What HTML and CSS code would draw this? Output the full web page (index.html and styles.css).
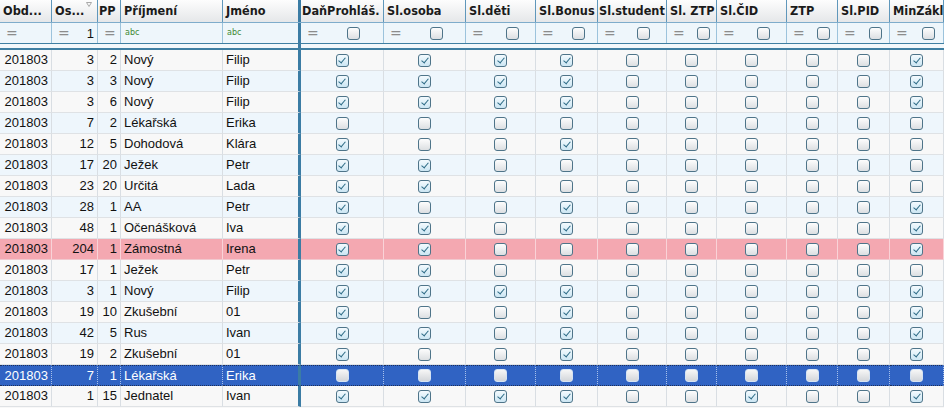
FILE: index.html
```html
<!DOCTYPE html>
<html>
<head>
<meta charset="utf-8">
<link rel="stylesheet" href="styles.css">
</head>
<body>
<div class="grid hdr">
  <div class="c">Obd...</div>
  <div class="c sort"><span>Os...</span><svg class="tri" width="6" height="5" viewBox="0 0 6 5"><path d="M0.5 0.5 H5.5 L3 4.5 Z" fill="none" stroke="#a9a9a9" stroke-width="1"/></svg></div>
  <div class="c tight">PP</div>
  <div class="c">Příjmení</div>
  <div class="c sep">Jméno</div>
  <div class="c tight">DaňProhláš.</div>
  <div class="c">Sl.osoba</div>
  <div class="c">Sl.děti</div>
  <div class="c">Sl.Bonus</div>
  <div class="c tight">Sl.student</div>
  <div class="c">Sl. ZTP</div>
  <div class="c">Sl.ČID</div>
  <div class="c">ZTP</div>
  <div class="c">Sl.PID</div>
  <div class="c">MinZákl</div>
</div>
<div class="grid flt">
  <div class="c"><span class="eq">=</span></div>
  <div class="c"><span class="eq">=</span><span class="fv">1</span></div>
  <div class="c"><span class="eq">=</span></div>
  <div class="c"><span class="abc">abc</span></div>
  <div class="c sep"><span class="abc">abc</span></div>
  <div class="c"><span class="eq">=</span><span class="fk"><i class="cb"></i></span></div>
  <div class="c"><span class="eq">=</span><span class="fk"><i class="cb"></i></span></div>
  <div class="c"><span class="eq">=</span><span class="fk"><i class="cb"></i></span></div>
  <div class="c"><span class="eq">=</span><span class="fk"><i class="cb"></i></span></div>
  <div class="c"><span class="eq">=</span><span class="fk"><i class="cb"></i></span></div>
  <div class="c"><span class="eq">=</span><span class="fk"><i class="cb"></i></span></div>
  <div class="c"><span class="eq">=</span><span class="fk"><i class="cb"></i></span></div>
  <div class="c"><span class="eq">=</span><span class="fk"><i class="cb"></i></span></div>
  <div class="c"><span class="eq">=</span><span class="fk"><i class="cb"></i></span></div>
  <div class="c"><span class="eq">=</span><span class="fk"><i class="cb"></i></span></div>
</div>
<div class="split"><div class="split-l"></div><div class="split-r"></div></div>

<div class="grid row odd">
  <div class="c n">201803</div><div class="c n">3</div><div class="c n">2</div><div class="c t">Nový</div><div class="c t sep">Filip</div>
  <div class="c k"><i class="cb on"></i></div><div class="c k"><i class="cb on"></i></div><div class="c k"><i class="cb on"></i></div><div class="c k"><i class="cb on"></i></div>
  <div class="c k"><i class="cb"></i></div><div class="c k"><i class="cb"></i></div><div class="c k"><i class="cb"></i></div><div class="c k"><i class="cb"></i></div><div class="c k"><i class="cb"></i></div><div class="c k"><i class="cb on"></i></div>
</div>
<div class="grid row even">
  <div class="c n">201803</div><div class="c n">3</div><div class="c n">3</div><div class="c t">Nový</div><div class="c t sep">Filip</div>
  <div class="c k"><i class="cb on"></i></div><div class="c k"><i class="cb on"></i></div><div class="c k"><i class="cb on"></i></div><div class="c k"><i class="cb on"></i></div>
  <div class="c k"><i class="cb"></i></div><div class="c k"><i class="cb"></i></div><div class="c k"><i class="cb"></i></div><div class="c k"><i class="cb"></i></div><div class="c k"><i class="cb"></i></div><div class="c k"><i class="cb on"></i></div>
</div>
<div class="grid row odd">
  <div class="c n">201803</div><div class="c n">3</div><div class="c n">6</div><div class="c t">Nový</div><div class="c t sep">Filip</div>
  <div class="c k"><i class="cb on"></i></div><div class="c k"><i class="cb on"></i></div><div class="c k"><i class="cb on"></i></div><div class="c k"><i class="cb on"></i></div>
  <div class="c k"><i class="cb"></i></div><div class="c k"><i class="cb"></i></div><div class="c k"><i class="cb"></i></div><div class="c k"><i class="cb"></i></div><div class="c k"><i class="cb"></i></div><div class="c k"><i class="cb on"></i></div>
</div>
<div class="grid row even">
  <div class="c n">201803</div><div class="c n">7</div><div class="c n">2</div><div class="c t">Lékařská</div><div class="c t sep">Erika</div>
  <div class="c k"><i class="cb"></i></div><div class="c k"><i class="cb"></i></div><div class="c k"><i class="cb"></i></div><div class="c k"><i class="cb"></i></div>
  <div class="c k"><i class="cb"></i></div><div class="c k"><i class="cb"></i></div><div class="c k"><i class="cb"></i></div><div class="c k"><i class="cb"></i></div><div class="c k"><i class="cb"></i></div><div class="c k"><i class="cb"></i></div>
</div>
<div class="grid row odd">
  <div class="c n">201803</div><div class="c n">12</div><div class="c n">5</div><div class="c t">Dohodová</div><div class="c t sep">Klára</div>
  <div class="c k"><i class="cb on"></i></div><div class="c k"><i class="cb"></i></div><div class="c k"><i class="cb"></i></div><div class="c k"><i class="cb on"></i></div>
  <div class="c k"><i class="cb"></i></div><div class="c k"><i class="cb"></i></div><div class="c k"><i class="cb"></i></div><div class="c k"><i class="cb"></i></div><div class="c k"><i class="cb"></i></div><div class="c k"><i class="cb"></i></div>
</div>
<div class="grid row even">
  <div class="c n">201803</div><div class="c n">17</div><div class="c n">20</div><div class="c t">Ježek</div><div class="c t sep">Petr</div>
  <div class="c k"><i class="cb on"></i></div><div class="c k"><i class="cb on"></i></div><div class="c k"><i class="cb"></i></div><div class="c k"><i class="cb"></i></div>
  <div class="c k"><i class="cb"></i></div><div class="c k"><i class="cb"></i></div><div class="c k"><i class="cb"></i></div><div class="c k"><i class="cb"></i></div><div class="c k"><i class="cb"></i></div><div class="c k"><i class="cb"></i></div>
</div>
<div class="grid row odd">
  <div class="c n">201803</div><div class="c n">23</div><div class="c n">20</div><div class="c t">Určitá</div><div class="c t sep">Lada</div>
  <div class="c k"><i class="cb on"></i></div><div class="c k"><i class="cb on"></i></div><div class="c k"><i class="cb"></i></div><div class="c k"><i class="cb"></i></div>
  <div class="c k"><i class="cb"></i></div><div class="c k"><i class="cb"></i></div><div class="c k"><i class="cb"></i></div><div class="c k"><i class="cb"></i></div><div class="c k"><i class="cb"></i></div><div class="c k"><i class="cb"></i></div>
</div>
<div class="grid row even">
  <div class="c n">201803</div><div class="c n">28</div><div class="c n">1</div><div class="c t">AA</div><div class="c t sep">Petr</div>
  <div class="c k"><i class="cb on"></i></div><div class="c k"><i class="cb"></i></div><div class="c k"><i class="cb"></i></div><div class="c k"><i class="cb on"></i></div>
  <div class="c k"><i class="cb"></i></div><div class="c k"><i class="cb"></i></div><div class="c k"><i class="cb"></i></div><div class="c k"><i class="cb"></i></div><div class="c k"><i class="cb"></i></div><div class="c k"><i class="cb on"></i></div>
</div>
<div class="grid row odd">
  <div class="c n">201803</div><div class="c n">48</div><div class="c n">1</div><div class="c t">Očenášková</div><div class="c t sep">Iva</div>
  <div class="c k"><i class="cb on"></i></div><div class="c k"><i class="cb on"></i></div><div class="c k"><i class="cb"></i></div><div class="c k"><i class="cb on"></i></div>
  <div class="c k"><i class="cb"></i></div><div class="c k"><i class="cb"></i></div><div class="c k"><i class="cb"></i></div><div class="c k"><i class="cb"></i></div><div class="c k"><i class="cb"></i></div><div class="c k"><i class="cb on"></i></div>
</div>
<div class="grid row pink">
  <div class="c n">201803</div><div class="c n">204</div><div class="c n">1</div><div class="c t">Zámostná</div><div class="c t sep">Irena</div>
  <div class="c k"><i class="cb on"></i></div><div class="c k"><i class="cb on"></i></div><div class="c k"><i class="cb"></i></div><div class="c k"><i class="cb"></i></div>
  <div class="c k"><i class="cb"></i></div><div class="c k"><i class="cb"></i></div><div class="c k"><i class="cb"></i></div><div class="c k"><i class="cb"></i></div><div class="c k"><i class="cb"></i></div><div class="c k"><i class="cb on"></i></div>
</div>
<div class="grid row odd">
  <div class="c n">201803</div><div class="c n">17</div><div class="c n">1</div><div class="c t">Ježek</div><div class="c t sep">Petr</div>
  <div class="c k"><i class="cb on"></i></div><div class="c k"><i class="cb on"></i></div><div class="c k"><i class="cb"></i></div><div class="c k"><i class="cb"></i></div>
  <div class="c k"><i class="cb"></i></div><div class="c k"><i class="cb"></i></div><div class="c k"><i class="cb"></i></div><div class="c k"><i class="cb"></i></div><div class="c k"><i class="cb"></i></div><div class="c k"><i class="cb"></i></div>
</div>
<div class="grid row even">
  <div class="c n">201803</div><div class="c n">3</div><div class="c n">1</div><div class="c t">Nový</div><div class="c t sep">Filip</div>
  <div class="c k"><i class="cb on"></i></div><div class="c k"><i class="cb on"></i></div><div class="c k"><i class="cb on"></i></div><div class="c k"><i class="cb on"></i></div>
  <div class="c k"><i class="cb"></i></div><div class="c k"><i class="cb"></i></div><div class="c k"><i class="cb"></i></div><div class="c k"><i class="cb"></i></div><div class="c k"><i class="cb"></i></div><div class="c k"><i class="cb on"></i></div>
</div>
<div class="grid row odd">
  <div class="c n">201803</div><div class="c n">19</div><div class="c n">10</div><div class="c t">Zkušební</div><div class="c t sep">01</div>
  <div class="c k"><i class="cb on"></i></div><div class="c k"><i class="cb"></i></div><div class="c k"><i class="cb"></i></div><div class="c k"><i class="cb on"></i></div>
  <div class="c k"><i class="cb"></i></div><div class="c k"><i class="cb"></i></div><div class="c k"><i class="cb"></i></div><div class="c k"><i class="cb"></i></div><div class="c k"><i class="cb"></i></div><div class="c k"><i class="cb on"></i></div>
</div>
<div class="grid row even">
  <div class="c n">201803</div><div class="c n">42</div><div class="c n">5</div><div class="c t">Rus</div><div class="c t sep">Ivan</div>
  <div class="c k"><i class="cb on"></i></div><div class="c k"><i class="cb on"></i></div><div class="c k"><i class="cb"></i></div><div class="c k"><i class="cb on"></i></div>
  <div class="c k"><i class="cb"></i></div><div class="c k"><i class="cb"></i></div><div class="c k"><i class="cb"></i></div><div class="c k"><i class="cb"></i></div><div class="c k"><i class="cb"></i></div><div class="c k"><i class="cb on"></i></div>
</div>
<div class="grid row odd">
  <div class="c n">201803</div><div class="c n">19</div><div class="c n">2</div><div class="c t">Zkušební</div><div class="c t sep">01</div>
  <div class="c k"><i class="cb on"></i></div><div class="c k"><i class="cb"></i></div><div class="c k"><i class="cb"></i></div><div class="c k"><i class="cb on"></i></div>
  <div class="c k"><i class="cb"></i></div><div class="c k"><i class="cb"></i></div><div class="c k"><i class="cb"></i></div><div class="c k"><i class="cb"></i></div><div class="c k"><i class="cb"></i></div><div class="c k"><i class="cb on"></i></div>
</div>
<div class="grid row sel">
  <div class="c n">201803</div><div class="c n">7</div><div class="c n">1</div><div class="c t">Lékařská</div><div class="c t sep">Erika</div>
  <div class="c k"><i class="cb"></i></div><div class="c k"><i class="cb"></i></div><div class="c k"><i class="cb"></i></div><div class="c k"><i class="cb"></i></div>
  <div class="c k"><i class="cb"></i></div><div class="c k"><i class="cb"></i></div><div class="c k"><i class="cb"></i></div><div class="c k"><i class="cb"></i></div><div class="c k"><i class="cb"></i></div><div class="c k"><i class="cb"></i></div>
</div>
<div class="grid row odd">
  <div class="c n">201803</div><div class="c n">1</div><div class="c n">15</div><div class="c t">Jednatel</div><div class="c t sep">Ivan</div>
  <div class="c k"><i class="cb on"></i></div><div class="c k"><i class="cb on"></i></div><div class="c k"><i class="cb on"></i></div><div class="c k"><i class="cb on"></i></div>
  <div class="c k"><i class="cb"></i></div><div class="c k"><i class="cb"></i></div><div class="c k"><i class="cb on"></i></div><div class="c k"><i class="cb"></i></div><div class="c k"><i class="cb"></i></div><div class="c k"><i class="cb on"></i></div>
</div>
</body>
</html>
```
FILE: styles.css
```css
html, body {
  margin: 0;
  padding: 0;
}
body {
  width: 944px;
  height: 408px;
  overflow: hidden;
  background: #f8f8f8;
  font-family: "Liberation Sans", Arial, sans-serif;
  font-size: 13px;
  color: #111;
}
.grid {
  display: grid;
  grid-template-columns: 52px 46px 23px 102px 78px 83px 82px 70px 62px 69px 50px 70px 51px 52px 54px;
}
.c {
  box-sizing: border-box;
  min-width: 0;
  white-space: nowrap;
  overflow: hidden;
}

/* header */
.hdr {
  height: 23px;
  box-sizing: border-box;
  border-bottom: 1px solid #7eaccb;
  background: linear-gradient(#fdfdfd, #e5e7e9);
}
.hdr .c {
  border-right: 1px solid #5f97bb;
  font-family: "DejaVu Sans Condensed", "DejaVu Sans", sans-serif;
  font-stretch: condensed;
  font-weight: bold;
  font-size: 12.6px;
  line-height: 21px;
  padding-left: 3px;
  color: #1b1b1b;
}
.hdr .c.tight { padding-left: 1px; }
.hdr .sort {
  display: flex;
  align-items: flex-start;
}
.hdr .sort .tri {
  margin: 2px 0 0 auto;
  padding-right: 5px;
  flex: none;
}

/* filter row */
.flt {
  height: 20px;
  background: #eef6fb;
}
.flt .c {
  border-right: 1px solid #9cc3dc;
  display: flex;
  align-items: center;
}
.eq {
  flex: none;
  width: 23px;
  box-sizing: border-box;
  padding-left: 6px;
  color: #8c8c8c;
  font-family: "DejaVu Sans", sans-serif;
  font-size: 14px;
  line-height: 18px;
}
.fv {
  margin-left: auto;
  padding-right: 3px;
  font-size: 13px;
}
.fk {
  flex: 1;
  display: flex;
  justify-content: center;
}
.abc {
  padding-left: 4px;
  color: #3f8a33;
  font-family: "DejaVu Sans", sans-serif;
  font-size: 8px;
  line-height: 18px;
}

/* separator below the filter */
.split {
  display: flex;
  height: 7px;
  box-sizing: border-box;
  border-top: 1px solid #3f7fa2;
  border-bottom: 2px solid #3f7fa2;
  background: #f3f8fb;
}
.split-l {
  width: 301px;
  box-sizing: border-box;
  border-right: 3px solid #3b7ca4;
}
.split-r { flex: 1; }

/* data rows */
.row { height: 21px; }
.row .c {
  border-right: 1px solid #d9dee3;
  border-bottom: 1px solid #dfe2e5;
  line-height: 20px;
}
.row .n { text-align: right; padding-right: 3px; }
.row .t { padding-left: 3px; }
.row .k {
  display: flex;
  align-items: center;
  justify-content: center;
}
.c.sep, .row .c.sep, .hdr .c.sep, .flt .c.sep {
  border-right: 3px solid #3b7ca4;
}
.odd { background: #f8f8f8; }
.even { background: #eef6fc; }
.pink { background: #f4a8b1; }
.pink .c { border-right-color: #f9d3d8; border-bottom-color: #f1c9cf; }
.sel { background: #3063c3; color: #fff; }
.sel .c {
  border-top: 1px dotted #1c2f5a;
  border-bottom: 1px dotted #1c2f5a;
  border-right: 1px dotted #a8c0ea;
  line-height: 19px;
}

/* checkbox */
.cb {
  display: block;
  position: relative;
  width: 13px;
  height: 13px;
  box-sizing: border-box;
  border: 1px solid #4e7489;
  border-radius: 3px;
  background: linear-gradient(#fdfdfd, #dcdfe2);
}
.cb.on {
  background: linear-gradient(#f3fafe, #cce6f3);
}
.cb.on::after {
  content: "";
  position: absolute;
  left: 3.5px;
  top: 1px;
  width: 3px;
  height: 6px;
  border: solid #2d6b86;
  border-width: 0 1.5px 1.5px 0;
  transform: rotate(40deg);
}
.sel .cb {
  border-color: #d5e3f3;
  background: linear-gradient(#f6f6f6, #d3d6da);
}
```
